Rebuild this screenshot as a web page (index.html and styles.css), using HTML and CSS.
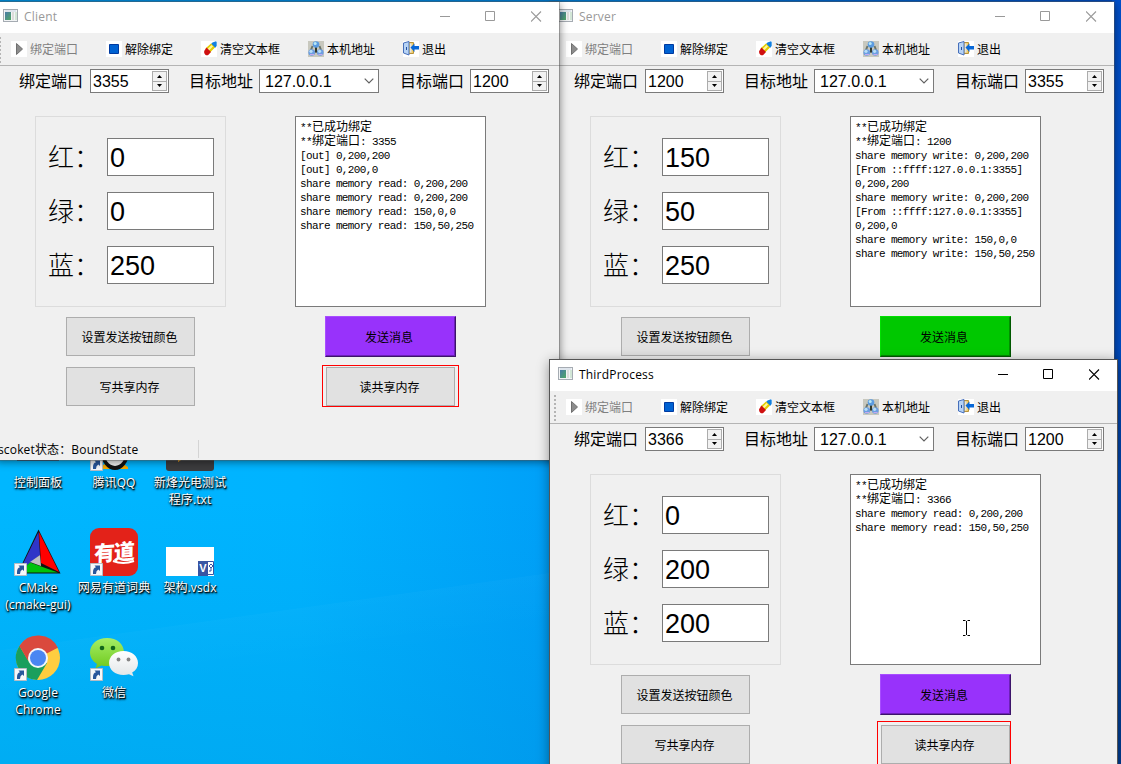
FILE: index.html
```html
<!DOCTYPE html>
<html lang="zh-CN">
<head>
<meta charset="utf-8">
<title>Desktop</title>
<link rel="stylesheet" href="styles.css">
</head>
<body>
<svg class="defs" aria-hidden="true">
  <defs>
    <linearGradient id="gWin" x1="0" y1="0" x2="1" y2="1"><stop offset="0" stop-color="#4a7aa8"/><stop offset="1" stop-color="#4fa864"/></linearGradient>
    <linearGradient id="gChat" x1="0" y1="0" x2="0" y2="1"><stop offset="0" stop-color="#a5ee66"/><stop offset="1" stop-color="#6fc91d"/></linearGradient>
    <linearGradient id="gGrey" x1="0" y1="0" x2="0" y2="1"><stop offset="0" stop-color="#fff"/><stop offset="1" stop-color="#e2e6e8"/></linearGradient>
  </defs>
  <symbol id="app" viewBox="0 0 16 14"><rect x=".5" y=".5" width="14" height="12" fill="#f2f4f5" stroke="#a5abb2"/><rect x="2" y="3" width="6" height="8" fill="url(#gWin)"/><rect x="9" y="3" width="2" height="8" fill="#dcdcda"/><rect x="12" y="3" width="2" height="8" fill="#d2e6d6"/><path d="M2 2h11" stroke="#cad6e4"/></symbol>
  <symbol id="play" viewBox="0 0 16 16"><path fill="#fff" d="M0 0h16v16H0z"/><path d="M5.500 2.500v11l6-5.500z" fill="#8c8c8c" stroke="#707070"/></symbol>
  <symbol id="stop" viewBox="0 0 16 16"><path fill="#fff" d="M0 0h16v16H0z"/><path d="M3.500 3.500h9v9h-9z" fill="#0062d2" stroke="#003aa0"/></symbol>
  <symbol id="clear" viewBox="0 0 16 16"><path fill="#fff" d="M0 0h16v16H0z"/><path d="M11.500 1.500L15 .300l.700.700v4L14 7l-4-4z" fill="#1280e0"/><path d="M10 2.500l4 4-5 5-4.500-4z" fill="#e3cc00"/><path d="M10.500 4l1.500 1.500-4.500 4.500L6 8.500z" fill="#fff79a"/><path d="M5.500 6.500l4.500 4.500-2.500 2.700q-1.500 1.300-3.200 0-1.700-1.500-1.100-3.700z" fill="#cf1010"/></symbol>
  <symbol id="net" viewBox="0 0 16 16"><path fill="#c8c8be" d="M0 0h16v16H0z"/><path d="M4.500 5L3 9M11.500 5L13 9M8 7v3l-4 3M8 10l4 3" stroke="#6b756b" stroke-width="2" fill="none"/><path d="M7 6h2v5H7z" fill="#303a30"/><circle cx="8" cy="3.500" r="3.300" fill="#5b9be0"/><circle cx="3.700" cy="11.500" r="3.300" fill="#6c9ee2"/><circle cx="12.300" cy="11.500" r="3.300" fill="#6c9ee2"/><circle cx="7.200" cy="2.600" r="1.500" fill="#b9e8f6"/><circle cx="3" cy="10.300" r="1.600" fill="#b9e0f6"/><circle cx="11.600" cy="10.300" r="1.600" fill="#b9e0f6"/><path d="M2 13.500h4M10.500 13.500h4" stroke="#c6a8ee"/></symbol>
  <symbol id="exit" viewBox="0 0 16 16"><path fill="#fff" d="M0 0h16v16H0z"/><path d="M4.500 1.500h6v11h-6z" fill="#f1cf68" stroke="#b8923c"/><path d="M.5 2l5.500-1.500V14L.5 12z" fill="#b7d3f5" stroke="#466fba"/><path d="M3.500 6v3" stroke="#23519c"/><path d="M7 2.500h1.500v9H7z" fill="#e4e4ea"/><path d="M7.500 6.500l4-4v2.500H16v3.500h-4.500V11z" fill="#0868d8"/></symbol>
  <symbol id="min" viewBox="0 0 11 11"><path d="M1 5.500h10" stroke="currentColor"/></symbol>
  <symbol id="max" viewBox="0 0 11 11"><path d="M.5.500h9v9h-9z" fill="none" stroke="currentColor"/></symbol>
  <symbol id="close" viewBox="0 0 11 11"><path d="M0 .500l10 10m0-10l-10 10" stroke="currentColor" stroke-width="1.100"/></symbol>
  <symbol id="up" viewBox="0 0 5 3"><path d="M0 3h5L2.500 0z"/></symbol>
  <symbol id="down" viewBox="0 0 5 3"><path d="M0 0h5L2.500 3z"/></symbol>
  <symbol id="chev" viewBox="0 0 10 6"><path d="M.7.700L5 5 9.300.700" fill="none" stroke="#606060" stroke-width="1.200"/></symbol>
  <symbol id="link" viewBox="0 0 13 13"><path d="M.5.500h12v12H.5z" fill="#f6f8fa" stroke="#b5bcc4"/><path d="M3 11V9q0-4 3-4.700L4.500 2.500H10v5.500L8.300 6.500Q6 7.500 6 11z" fill="#28579c"/></symbol>
</svg>

<main class="desktop">
  <section class="icons">
    <div class="shortcut"><svg class="pic" viewBox="0 0 48 48"><path d="M3 24h42v14H3z" fill="#15507c"/></svg><span>控制面板</span></div>
    <div class="shortcut"><svg class="pic" viewBox="0 0 48 48"><path d="M10 44q14-10 28 0v2H10z" fill="#f5a800"/><ellipse cx="25" cy="29" rx="14" ry="18" fill="#111"/><ellipse cx="25" cy="28" rx="11" ry="15" fill="#f3f3f3"/><use href="#link" x="0" y="35" width="13" height="13"/></svg><span>腾讯QQ</span></div>
    <div class="shortcut"><svg class="pic" viewBox="0 0 48 48"><rect width="48" height="48" rx="3" fill="#3c3c3e"/><path d="M12 39v-9h14z" fill="#f5a010"/></svg><span>新烽光电测试<br>程序.txt</span></div>
    <div class="shortcut"><svg class="pic" viewBox="0 0 48 48"><path d="M24.500 1.500L3.500 45.500h43z" fill="#111"/><path d="M24.500 4L5 44l11-9 10-8z" fill="#2f35c8"/><path d="M25 4l20 40-18-9z" fill="#f00"/><path d="M5 44.500l11-10 28 10z" fill="#00c20c"/><path d="M26 27l1 11-11-4z" fill="#c0c0c0"/><use href="#link" x="0" y="35" width="13" height="13"/></svg><span>CMake<br>(cmake-gui)</span></div>
    <div class="shortcut"><div class="pic youdao"><b>有道</b><svg viewBox="0 0 48 48"><path d="M23 33q10 4 21 0" fill="none" stroke="#fff" stroke-width="2"/><use href="#link" x="0" y="35" width="13" height="13"/></svg></div><span>网易有道词典</span></div>
    <div class="shortcut"><div class="pic visio"><i><b>V</b><svg viewBox="0 0 6 14"><path d="M0 .5h5.500v13H0M1 5l2-2 2 2-2 2zM3 7v3H1" fill="none" stroke="#3955a3"/></svg></i></div><span>架构.vsdx</span></div>
    <div class="shortcut"><svg class="pic" viewBox="0 -1 48 48"><circle cx="24" cy="24" r="22" fill="#ffcd40"/><path d="M24 24L5 12.800A22 22 0 0 1 43.300 14z" fill="#da493d"/><path d="M5.500 12A22 22 0 0 0 23 46L33 29 24 24 14.500 27z" fill="#1a9f5d"/><path d="M24 14h20A22 22 0 0 0 5.500 12l8 14z" fill="#da493d"/><circle cx="24" cy="24" r="10" fill="#f4f6fa"/><circle cx="24" cy="24" r="8" fill="#4a86f2"/><use href="#link" x="0" y="34" width="13" height="13"/></svg><span>Google<br>Chrome</span></div>
    <div class="shortcut"><svg class="pic" viewBox="0 0 48 48"><path d="M17 5C7.500 5 0 11 0 19.500c0 5 2.500 8.500 7 11.500L5.500 35.500 11.500 32.500c8 2 22.500-.5 22.500-13C34 11 27 5 17 5z" fill="url(#gChat)"/><path d="M33.500 18C25 18 19 23.500 19 30s6 12 14.500 12c2 0 3.500-.3 5.500-.8l4.500 2-1.300-3.700C46 37.500 48 34 48 30c0-6.500-6-12-14.500-12z" fill="url(#gGrey)"/><g fill="#12661c"><circle cx="12" cy="15" r="2.300"/><circle cx="23" cy="15" r="2.300"/></g><g fill="#858585"><circle cx="28.500" cy="26.500" r="1.900"/><circle cx="38.500" cy="26.500" r="1.900"/></g><use href="#link" x="0" y="35" width="13" height="13"/></svg><span>微信</span></div>
  </section>

  <section class="window server">
    <header class="titlebar"><svg class="app"><use href="#app"/></svg><span>Server</span><nav><svg><use href="#min"/></svg><svg><use href="#max"/></svg><svg><use href="#close"/></svg></nav></header>
    <div class="toolbar">
      <a class="off"><svg><use href="#play"/></svg><span>绑定端口</span></a><a><svg><use href="#stop"/></svg><span>解除绑定</span></a><a><svg><use href="#clear"/></svg><span>清空文本框</span></a><a><svg><use href="#net"/></svg><span>本机地址</span></a><a><svg><use href="#exit"/></svg><span>退出</span></a>
    </div>
    <div class="address">
      <label>绑定端口</label><div class="field spin">1200<span><i><svg><use href="#up"/></svg></i><i><svg><use href="#down"/></svg></i></span></div>
      <label>目标地址</label><div class="field combo">127.0.0.1<svg><use href="#chev"/></svg></div>
      <label>目标端口</label><div class="field spin">3355<span><i><svg><use href="#up"/></svg></i><i><svg><use href="#down"/></svg></i></span></div>
    </div>
    <div class="content">
      <div class="group">
        <div><label>红：</label><p>150</p></div>
        <div><label>绿：</label><p>50</p></div>
        <div><label>蓝：</label><p>250</p></div>
      </div>
      <pre class="log">**<em>已成功绑定</em>
**<em>绑定端口</em>: 1200
share memory write: 0,200,200
[From ::ffff:127.0.0.1:3355]
0,200,200
share memory write: 0,200,200
[From ::ffff:127.0.0.1:3355]
0,200,0
share memory write: 150,0,0
share memory write: 150,50,250</pre>
    </div>
    <div class="actions">
      <div class="col"><button>设置发送按钮颜色</button><button>写共享内存</button></div>
      <div class="col right"><button class="send green">发送消息</button><div class="mark"><button>读共享内存</button></div></div>
    </div>
  </section>

  <section class="window client">
    <header class="titlebar"><svg class="app"><use href="#app"/></svg><span>Client</span><nav><svg><use href="#min"/></svg><svg><use href="#max"/></svg><svg><use href="#close"/></svg></nav></header>
    <div class="toolbar">
      <a class="off"><svg><use href="#play"/></svg><span>绑定端口</span></a><a><svg><use href="#stop"/></svg><span>解除绑定</span></a><a><svg><use href="#clear"/></svg><span>清空文本框</span></a><a><svg><use href="#net"/></svg><span>本机地址</span></a><a><svg><use href="#exit"/></svg><span>退出</span></a>
    </div>
    <div class="address">
      <label>绑定端口</label><div class="field spin">3355<span><i><svg><use href="#up"/></svg></i><i><svg><use href="#down"/></svg></i></span></div>
      <label>目标地址</label><div class="field combo">127.0.0.1<svg><use href="#chev"/></svg></div>
      <label>目标端口</label><div class="field spin">1200<span><i><svg><use href="#up"/></svg></i><i><svg><use href="#down"/></svg></i></span></div>
    </div>
    <div class="content">
      <div class="group">
        <div><label>红：</label><p>0</p></div>
        <div><label>绿：</label><p>0</p></div>
        <div><label>蓝：</label><p>250</p></div>
      </div>
      <pre class="log">**<em>已成功绑定</em>
**<em>绑定端口</em>: 3355
[out] 0,200,200
[out] 0,200,0
share memory read: 0,200,200
share memory read: 0,200,200
share memory read: 150,0,0
share memory read: 150,50,250</pre>
    </div>
    <div class="actions">
      <div class="col"><button>设置发送按钮颜色</button><button>写共享内存</button></div>
      <div class="col right"><button class="send">发送消息</button><div class="mark"><button>读共享内存</button></div></div>
    </div>
    <footer class="status"><span>scoket状态：BoundState</span></footer>
  </section>

  <section class="window third">
    <header class="titlebar"><svg class="app"><use href="#app"/></svg><span>ThirdProcess</span><nav><svg><use href="#min"/></svg><svg><use href="#max"/></svg><svg><use href="#close"/></svg></nav></header>
    <div class="toolbar">
      <a class="off"><svg><use href="#play"/></svg><span>绑定端口</span></a><a><svg><use href="#stop"/></svg><span>解除绑定</span></a><a><svg><use href="#clear"/></svg><span>清空文本框</span></a><a><svg><use href="#net"/></svg><span>本机地址</span></a><a><svg><use href="#exit"/></svg><span>退出</span></a>
    </div>
    <div class="address">
      <label>绑定端口</label><div class="field spin">3366<span><i><svg><use href="#up"/></svg></i><i><svg><use href="#down"/></svg></i></span></div>
      <label>目标地址</label><div class="field combo">127.0.0.1<svg><use href="#chev"/></svg></div>
      <label>目标端口</label><div class="field spin">1200<span><i><svg><use href="#up"/></svg></i><i><svg><use href="#down"/></svg></i></span></div>
    </div>
    <div class="content">
      <div class="group">
        <div><label>红：</label><p>0</p></div>
        <div><label>绿：</label><p>200</p></div>
        <div><label>蓝：</label><p>200</p></div>
      </div>
      <pre class="log">**<em>已成功绑定</em>
**<em>绑定端口</em>: 3366
share memory read: 0,200,200
share memory read: 150,50,250</pre>
    </div>
    <div class="actions">
      <div class="col"><button>设置发送按钮颜色</button><button>写共享内存</button></div>
      <div class="col right"><button class="send">发送消息</button><div class="mark"><button>读共享内存</button></div></div>
    </div>
  </section>
  <svg class="cursor" viewBox="0 0 7 16"><path d="M0 .5h2.500M4.500.500H7M3.500 1v14M0 15.500h2.500M4.500 15.500H7" stroke="#000"/></svg>
</main>
</body>
</html>
```

FILE: styles.css
```css
* { box-sizing: border-box; }
body { margin: 0; font: 12px/14px "Liberation Sans", "Noto Sans CJK SC", sans-serif; color: #000; }
svg { display: block; flex: none; }
.defs { position: absolute; width: 0; height: 0; }

.desktop {
  position: relative; width: 1121px; height: 764px; overflow: hidden;
  background:
    linear-gradient(#0050cc, #004ec4 45%, #003e94) 1112px 0 / 9px 764px no-repeat,
    linear-gradient(90deg, #008ad6, #0078cc 50%, #0046b4) 0 0 / 1121px 3px no-repeat,
    linear-gradient(172deg, transparent 49.8%, #ffffff05 50%, transparent 65%) 0 460px / 550px 304px no-repeat,
    linear-gradient(180deg, transparent 500px, #0088c838) 0 0 / 550px 764px no-repeat,
    linear-gradient(90deg, #00b7ff, #00b3ff 300px, #00a0f8 550px);
}

.icons { position: absolute; left: 0; top: 423px; display: grid; grid-template-columns: repeat(3, 76px); grid-auto-rows: 105px; }
.shortcut { display: flex; flex-direction: column; align-items: center; gap: 3px; }
.shortcut > span {
  font: 12px/17px "Open Sans", "Noto Sans CJK SC", sans-serif; color: #fff; text-align: center; white-space: nowrap; letter-spacing: .1px;
  text-shadow: 1px 1px 1px #000, 0 1px 2px #000c, 1px 2px 2px #0008;
}
.pic { width: 48px; height: 48px; flex: none; }
.youdao { display: grid; background: #e32219; border-radius: 9px; }
.youdao > * { grid-area: 1 / 1; }
.youdao b { font: 900 21px/47px "Noto Sans CJK SC", sans-serif; color: #fff; transform: rotate(-4deg) skewX(-5deg); text-align: center; letter-spacing: -1px; }
.visio { display: flex; align-items: flex-end; justify-content: flex-end; background: linear-gradient(transparent 19px, #fff 19px); }
.visio i { display: flex; background: #fff; font-style: normal; }
.visio b { width: 10px; height: 15px; background: #3955a3; color: #fff; font: bold 11px/15px "Liberation Sans", sans-serif; text-align: center; }
.visio svg { width: 6px; height: 14px; }

.window { position: absolute; display: flex; flex-direction: column; background: #f0f0f0; box-shadow: 0 0 0 1px #5a5a5a66, 1px 2px 8px #0007; }
.client { left: -5px; top: 2px; width: 564px; height: 458px; }
.server { left: 550px; top: 2px; width: 564px; height: 458px; }
.third { left: 550px; top: 360px; width: 567px; height: 458px; box-shadow: 0 0 0 1px #555, 0 2px 12px #0007; }

.titlebar { display: flex; align-items: center; height: 31px; background: #fff; color: #999; padding-left: 8px; font: 12px/31px "Open Sans", sans-serif; letter-spacing: .2px; }
.titlebar .app { width: 16px; height: 14px; margin-top: -3px; }
.titlebar span { margin: -2px auto 0 5px; }
.titlebar nav { display: flex; margin-top: -2px; }
.titlebar nav svg { width: 11px; height: 11px; margin: 0 17px 0 18px; }
.third .titlebar { color: #000; }

.toolbar { display: flex; gap: 28px; align-items: center; height: 33px; padding-left: 16px; border-bottom: 1px solid #b4b4b4; background: repeating-linear-gradient(#b4b4b4 0 2px, transparent 2px 4px) 4px 4px / 2px 26px no-repeat; }
.toolbar a { display: flex; align-items: center; gap: 3px; white-space: nowrap; }
.toolbar a span { padding-top: 2px; }
.toolbar svg { width: 16px; height: 16px; }
.toolbar .off { color: #808080; }

.address { display: flex; align-items: center; height: 24px; margin-top: 3px; padding-left: 24px; font-size: 16px; line-height: 23px; }
.address label { width: 71px; white-space: nowrap; }
.field { display: flex; justify-content: space-between; height: 24px; background: #fff; border: 1px solid #7a7a7a; padding-left: 2px; }
.spin { width: 79px; }
.combo { width: 120px; align-items: center; padding: 0 4px 0 5px; }
.combo svg { width: 10px; height: 6px; }
.spin + label { margin-left: 20px; width: 70px; }
.combo + label { margin-left: 21px; width: 70px; }
.spin span { display: flex; flex-direction: column; width: 16px; padding: 1px 1px 1px 0; }
.spin i { flex: 1; display: grid; place-content: center; border: 1px solid #acacac; background: #f2f2f2; }
.spin i + i { border-top: 0; }
.spin i svg { width: 5px; height: 3px; }

.content { display: flex; gap: 69px; margin: 23px 0 0 40px; }
.group, .log { width: 191px; height: 191px; }
.group { display: flex; flex-direction: column; gap: 16px; border: 1px solid #dcdcdc; padding: 21px 11px 0 12px; }
.group div { display: flex; justify-content: space-between; }
.group label { font: 300 26px/36px "Noto Sans CJK SC", sans-serif; white-space: nowrap; width: 59px; }
.group p { margin: 0; width: 107px; height: 38px; background: #fff; border: 1px solid #7a7a7a; padding-left: 2px; font-size: 27px; line-height: 38px; }
.log { margin: 0; padding: 4px 4px; background: #fff; border: 1px solid #7a7a7a; font: 11px/14px "Liberation Mono", monospace; letter-spacing: -.62px; }
.log em { font: 12px/0 "Noto Sans CJK SC", sans-serif; letter-spacing: 0; }

.actions { display: flex; padding-left: 71px; margin-top: 10px; }
.col { display: flex; flex-direction: column; width: 129px; gap: 11px; }
.right { margin: -1px 0 0 127px; width: auto; gap: 8px; }
button { width: 129px; height: 39px; padding: 0 2px 0 0; background: #e1e1e1; border: 1px solid #adadad; font: 12px/14px "Noto Sans CJK SC", sans-serif; color: #000; }
.send { width: 131px; height: 41px; margin-left: 3px; background: #9832fb; border: 1px solid #a84dff; border-right-color: #3c146a; border-bottom-color: #3c146a; box-shadow: inset -1px -1px #6c20b8; padding-right: 3px; }
.green { background: #00c800; border-color: #00e000 #005800 #005800 #00e000; box-shadow: inset -1px -1px #009000; }
.mark { width: 137px; height: 42px; padding: 1px 3px; border: 1px solid #f00; }
.third .right { gap: 6px; }
.third .mark { width: 134px; height: 46px; padding-top: 3px; padding-right: 0; }

.status { margin-top: 33px; height: 18px; padding-left: 3px; font: 12px/19px "Open Sans", "Noto Sans CJK SC", sans-serif; letter-spacing: .15px; }
.status span { display: block; width: 201px; height: 18px; border-right: 1px solid #d4d4d4; white-space: nowrap; }
.cursor { position: absolute; left: 963px; top: 620px; width: 7px; height: 16px; }
```
